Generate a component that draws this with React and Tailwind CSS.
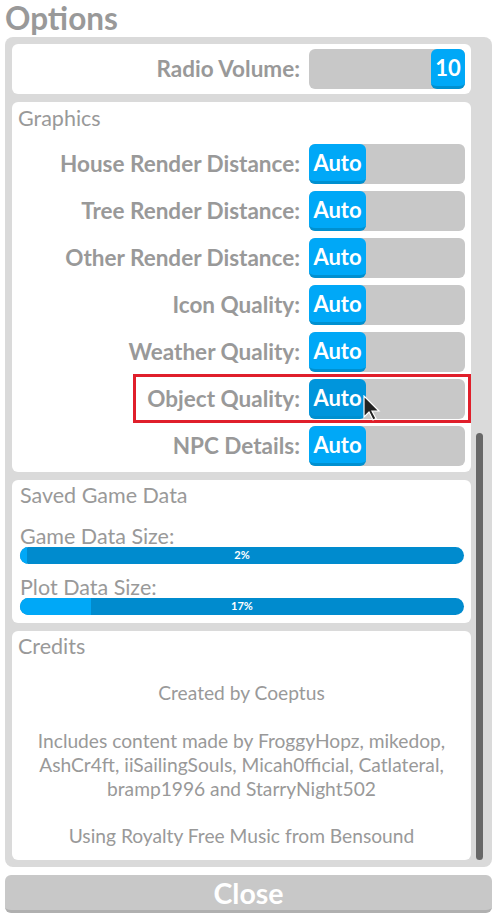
import React from "react";

const font = { fontFamily: '"Lato", "Liberation Sans", sans-serif' };

function Toggle({ value, hover, wide }) {
  return (
    <div className="relative flex h-[40px] w-[156px] rounded-md bg-[#c8c8c8]">
      <div
        className={
          (wide ? "ml-auto w-[34px] " : "w-[57px] ") +
          (hover ? "bg-[#0095dc] " : "bg-[#00a8f7] ") +
          "flex h-[40px] items-center justify-center rounded-md border-b-[3px] border-[#0090d0] pt-[1px] text-[22px] font-bold leading-none text-white"
        }
      >
        {value}
      </div>
    </div>
  );
}

function Row({ label, value = "Auto", hover, wide }) {
  return (
    <div className="flex items-center justify-end gap-[9px]">
      <span className="text-[22.5px] font-bold leading-none text-[#999999]">{label}</span>
      <Toggle value={value} hover={hover} wide={wide} />
    </div>
  );
}

function Bar({ label, pct, fill }) {
  return (
    <div className="flex flex-col">
      <span className="h-[22px] text-[21.5px] leading-[22px] text-[#999999]">{label}</span>
      <div className="relative h-[17px] w-[444px] overflow-hidden rounded-full bg-[#008bce]">
        <div className="h-full bg-[#00a8f7]" style={{ width: fill }} />
        <span className="absolute inset-0 flex items-center justify-center text-[11px] font-bold text-white">
          {pct}
        </span>
      </div>
    </div>
  );
}

export default function App() {
  return (
    <div className="h-[913px] w-[497px] overflow-hidden bg-white" style={font}>
      <div className="h-[37px] pl-[5px] text-[31.5px] font-bold leading-[37px] text-[#999999]">
        Options
      </div>
      <div className="mx-[5px] flex h-[830px] rounded-lg bg-[#dadada] pl-[7px] pt-[7px]">
        <div className="flex w-[459px] flex-col gap-[8px]">
          <div className="flex h-[50px] items-center justify-end rounded-md bg-white pr-[6px]">
            <Row label="Radio Volume:" value="10" wide />
          </div>
          <div className="flex h-[370px] flex-col rounded-md bg-white pr-[6px]">
            <div className="h-[42px] pl-[6px] pt-[4px] text-[21.5px] leading-[24px] text-[#999999]">Graphics</div>
            <div className="flex flex-col gap-[7px]">
              <Row label="House Render Distance:" />
              <Row label="Tree Render Distance:" />
              <Row label="Other Render Distance:" />
              <Row label="Icon Quality:" />
              <Row label="Weather Quality:" />
              <div className="relative">
                <Row label="Object Quality:" hover />
                <div className="pointer-events-none absolute left-[121px] right-[-6px] top-[-5px] bottom-[-4px] border-[3px] border-[#e01f2b]" />
                <svg className="absolute left-[351px] top-[16px]" width="18" height="26" viewBox="0 0 18 26">
                  <path d="M1 1 L1 22 L6 17 L10 25 L13 23.5 L9 16 L16 16 Z" fill="#222" stroke="#fff" strokeWidth="1.2" />
                </svg>
              </div>
              <Row label="NPC Details:" />
            </div>
          </div>
          <div className="flex h-[143px] flex-col rounded-md bg-white px-[8px]">
            <div className="h-[45px] pl-[-2px] pt-[3px] text-[21.5px] leading-[24px] text-[#999999]">Saved Game Data</div>
            <div className="flex flex-col gap-[12px]">
              <Bar label="Game Data Size:" pct="2%" fill="1.5%" />
              <Bar label="Plot Data Size:" pct="17%" fill="16%" />
            </div>
          </div>
          <div className="flex h-[229px] flex-col rounded-md bg-white">
            <div className="h-[50px] pl-[6px] pt-[3px] text-[21.5px] leading-[24px] text-[#999999]">Credits</div>
            <div className="flex flex-col items-center text-center text-[19.2px] leading-[24px] text-[#999999]">
              <p>Created by Coeptus</p>
              <p className="mt-[24px]">
                Includes content made by FroggyHopz, mikedop,
                <br />
                AshCr4ft, iiSailingSouls, Micah0fficial, Catlateral,
                <br />
                bramp1996 and StarryNight502
              </p>
              <p className="mt-[23px]">Using Royalty Free Music from Bensound</p>
            </div>
          </div>
        </div>
        <div className="flex flex-1 flex-col justify-end pb-[7px] pl-[5px]">
          <div className="h-[427px] w-[7px] rounded-full bg-[#686868]" />
        </div>
      </div>
      <div className="mx-[5px] mt-[8px] flex h-[38px] items-center justify-center rounded-md border-b-[3px] border-[#b0b0b0] bg-[#c8c8c8] pt-[2px] text-[28.5px] font-bold leading-none text-white">
        Close
      </div>
    </div>
  );
}
